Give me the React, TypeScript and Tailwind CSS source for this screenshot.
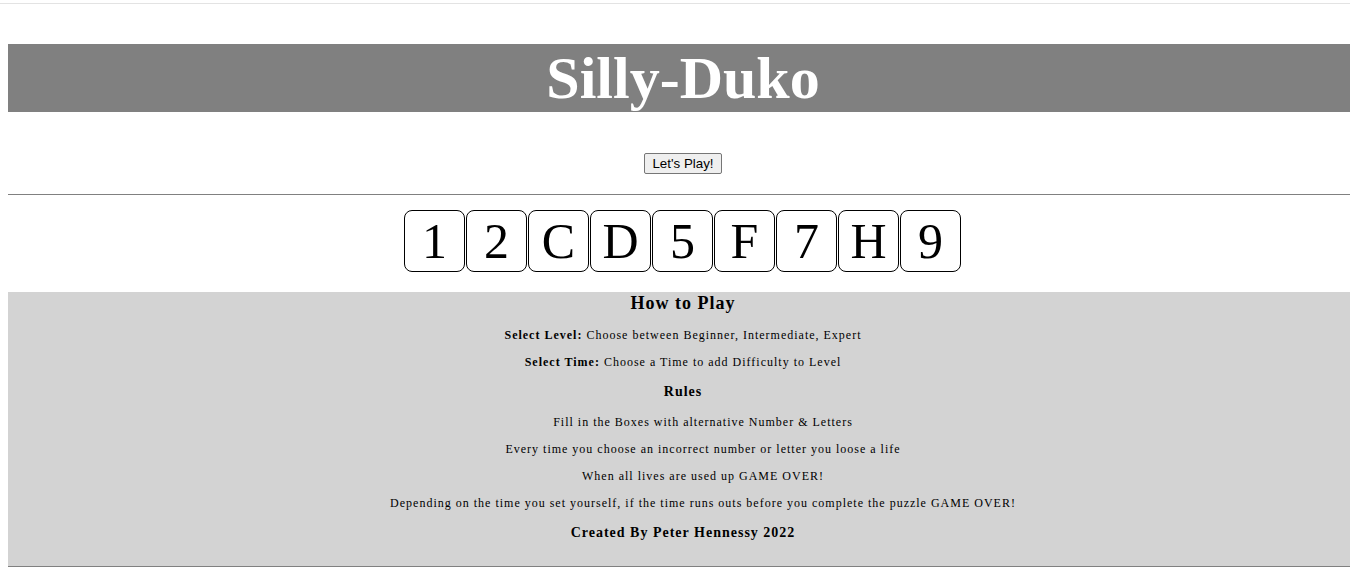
import React from 'react';

const tiles = ['1', '2', 'C', 'D', '5', 'F', '7', 'H', '9'];

const rules = [
  'Fill in the Boxes with alternative Number & Letters',
  'Every time you choose an incorrect number or letter you loose a life',
  'When all lives are used up GAME OVER!',
  'Depending on the time you set yourself, if the time runs outs before you complete the puzzle GAME OVER!',
];

export default function App() {
  return (
    <div className="min-h-[573px] overflow-hidden bg-white font-['Liberation_Serif',serif] text-black">
      <div className="h-[3px]" />
      <div className="h-px bg-[#e3e3e3]" />
      <div className="w-[1358px] pl-2 pt-[40px]">
        <h1 className="h-[68px] bg-[#808080] text-center text-[60px] font-bold leading-[68px] text-white">
          Silly-Duko
        </h1>
        <div className="flex justify-center pt-[41px]">
          <button className="h-[21px] rounded-[2px] border border-[#767676] bg-[#efefef] px-[7px] font-['Liberation_Sans',Arial,sans-serif] text-[13.33px] leading-[19px] text-black">
            Let's Play!
          </button>
        </div>
        <div className="mt-[20px] h-px bg-[#808080]" />
        <div className="flex justify-center pt-[15px]">
          {tiles.map((t) => (
            <div
              key={t}
              className="mr-px flex h-[62px] w-[61px] items-center justify-center rounded-[8px] border border-black text-[50px] leading-none"
            >
              {t}
            </div>
          ))}
        </div>
        <div className="mt-[20px] h-[274px] bg-[#d3d3d3] text-center tracking-[1px]">
          <h3 className="pt-[1px] text-[18px] font-bold leading-[21px]">How to Play</h3>
          <p className="mt-[14px] text-[12px] leading-[15px]">
            <b>Select Level:</b> Choose between Beginner, Intermediate, Expert
          </p>
          <p className="mt-[12px] text-[12px] leading-[15px]">
            <b>Select Time:</b> Choose a Time to add Difficulty to Level
          </p>
          <h4 className="mt-[14px] text-[14px] font-bold leading-[16px]">Rules</h4>
          <ul className="pl-[40px]">
            {rules.map((r, i) => (
              <li key={i} className={`${i === 0 ? 'mt-[15px]' : 'mt-[12px]'} text-[12px] leading-[15px]`}>
                {r}
              </li>
            ))}
          </ul>
          <p className="mt-[14px] text-[14px] font-bold leading-[16px]">Created By Peter Hennessy 2022</p>
        </div>
        <div className="h-px bg-[#808080]" />
      </div>
    </div>
  );
}
